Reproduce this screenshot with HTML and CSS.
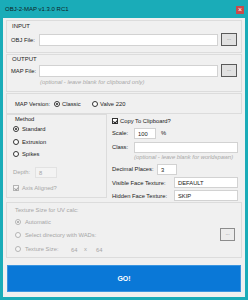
FILE: index.html
```html
<!DOCTYPE html>
<html lang="en">
<head>
    <meta charset="UTF-8">
    <title>OBJ-2-MAP v1.3.0 RC1</title>
    <link rel="stylesheet" href="styles.css">
</head>
<body>
    <div class="window">
        <div class="titlebar">
            <span class="title">OBJ-2-MAP v1.3.0 RC1</span>
            <span class="close">&#215;</span>
        </div>

        <div class="content">
            <section class="group group-input">
                <div class="group-title">INPUT</div>
                <div class="file-row">
                    <span class="file-label">OBJ File:</span>
                    <span class="field file-field"></span>
                    <span class="browse">...</span>
                </div>
            </section>

            <section class="group group-output">
                <div class="group-title">OUTPUT</div>
                <div class="file-row">
                    <span class="file-label">MAP File:</span>
                    <span class="field file-field"></span>
                    <span class="browse">...</span>
                </div>
                <div class="hint output-hint">(optional - leave blank for clipboard only)</div>
            </section>

            <div class="group version-row">
                <span class="version-label">MAP Version:</span>
                <span class="radio checked"></span><span class="version-opt">Classic</span>
                <span class="radio"></span><span class="version-opt">Valve 220</span>
            </div>

            <div class="middle">
                <section class="group method">
                    <div class="method-title">Method</div>
                    <div class="radio-row"><span class="radio checked"></span>Standard</div>
                    <div class="radio-row"><span class="radio"></span>Extrusion</div>
                    <div class="radio-row"><span class="radio"></span>Spikes</div>
                    <div class="depth-row disabled">
                        <span class="depth-label">Depth:</span>
                        <span class="field field-disabled depth-field">8</span>
                    </div>
                    <div class="axis-row disabled"><span class="check checked check-disabled"></span>Axis Aligned?</div>
                </section>

                <section class="options">
                    <div class="opt-row copy-row"><span class="check checked"></span>Copy To Clipboard?</div>
                    <div class="opt-row scale-row">
                        <span class="opt-label short">Scale:</span>
                        <span class="field scale-field">100</span>
                        <span class="unit">%</span>
                    </div>
                    <div class="opt-row class-row">
                        <span class="opt-label short">Class:</span>
                        <span class="field grow"></span>
                    </div>
                    <div class="hint class-hint">(optional - leave blank for worldspawn)</div>
                    <div class="opt-row decimal-row">
                        <span class="opt-label medium">Decimal Places:</span>
                        <span class="field decimal-field">3</span>
                    </div>
                    <div class="opt-row texture-row">
                        <span class="opt-label long">Visible Face Texture:</span>
                        <span class="field grow">DEFAULT</span>
                    </div>
                    <div class="opt-row texture-row">
                        <span class="opt-label long">Hidden Face Texture:</span>
                        <span class="field grow">SKIP</span>
                    </div>
                </section>
            </div>

            <section class="group texture disabled">
                <div class="texture-title">Texture Size for UV calc:</div>
                <div class="radio-row auto-row"><span class="radio checked"></span>Automatic</div>
                <div class="radio-row wad-row">
                    <span class="radio"></span><span class="wad-label">Select directory with WADs:</span>
                    <span class="field field-hidden grow"></span>
                    <span class="browse browse-disabled">...</span>
                </div>
                <div class="radio-row size-row">
                    <span class="radio"></span><span class="size-label">Texture Size:</span>
                    <span class="field field-disabled size-field">64</span>
                    <span class="times">x</span>
                    <span class="field field-disabled size-field">64</span>
                </div>
            </section>

            <button class="go">GO!</button>
        </div>
    </div>
</body>
</html>
```

FILE: styles.css
```css
* {
    box-sizing: border-box;
}

body {
    margin: 0;
    font-family: 'Liberation Sans', Arial, sans-serif;
    font-size: 5.8px;
    color: #1a1a1a;
}

.window {
    width: 248px;
    height: 300px;
    display: flex;
    flex-direction: column;
}

.titlebar {
    height: 18px;
    background-color: #1aacb8;
    display: flex;
    align-items: center;
    justify-content: space-between;
    padding: 0 4px 0 5px;
}

.title {
    font-size: 6px;
    color: #0e2226;
}

.close {
    width: 8px;
    height: 8px;
    margin-top: 2px;
    background-color: #c94a4a;
    color: #fff;
    font-size: 7px;
    line-height: 8px;
    text-align: center;
}

.content {
    flex: 1;
    background-color: #f0f0f0;
    border: 3px solid #1aacb8;
    border-top: 0;
    padding: 2px 3px 5px 3px;
    display: flex;
    flex-direction: column;
}

.group {
    border: 1px solid #dcdcdc;
}

.group-title {
    height: 10px;
    line-height: 10px;
    padding-left: 1px;
    font-size: 6px;
}

.group-input {
    height: 33px;
    padding: 0 4px;
}

.group-output {
    height: 38px;
    margin-top: 1px;
    padding: 0 4px;
}

.group-output .group-title {
    height: 9px;
    line-height: 9px;
}

.group-input .file-row {
    margin-top: 2px;
}

.file-row {
    height: 13px;
    display: flex;
    align-items: center;
}

.file-label {
    width: 28px;
}

.field {
    height: 11px;
    line-height: 10px;
    background-color: #fff;
    border: 1px solid #d2d2d2;
    padding-left: 3px;
}

.file-field {
    flex: 1;
    height: 12px;
}

.browse {
    width: 16px;
    height: 13px;
    margin-left: 3px;
    background-color: #e1e1e1;
    border: 1px solid #5a5a5a;
    color: #777;
    text-align: center;
    line-height: 9px;
    font-size: 5px;
}

.hint {
    height: 10px;
    line-height: 10px;
    color: #a8a8a8;
    font-style: italic;
}

.output-hint {
    padding-left: 29px;
}

.version-row {
    height: 21px;
    margin-top: 1px;
    display: flex;
    align-items: center;
    padding-left: 8px;
}

.version-label {
    width: 39px;
}

.version-opt {
    margin-left: 2px;
    width: 30px;
}

.radio {
    width: 6px;
    height: 6px;
    border: 1px solid #333;
    border-radius: 50%;
    background-color: #fff;
    display: inline-flex;
    align-items: center;
    justify-content: center;
    flex-shrink: 0;
}

.radio.checked::after {
    content: "";
    width: 2px;
    height: 2px;
    border-radius: 50%;
    background-color: #222;
}

.check {
    width: 6px;
    height: 6px;
    border: 1px solid #333;
    background-color: #fff;
    position: relative;
    flex-shrink: 0;
}

.check.checked::after {
    content: "";
    position: absolute;
    left: 1px;
    top: 0;
    width: 1.5px;
    height: 3px;
    border: solid #222;
    border-width: 0 1px 1px 0;
    transform: rotate(40deg);
}

.middle {
    height: 88px;
    display: flex;
    gap: 4px;
}

.method {
    width: 101px;
    height: 84px;
    padding: 0 0 0 6px;
}

.method-title {
    height: 8px;
    line-height: 8px;
    padding-left: 2px;
}

.radio-row {
    height: 12.5px;
    display: flex;
    align-items: center;
    gap: 3px;
}

.depth-row {
    height: 11px;
    margin-top: 6px;
    display: flex;
    align-items: center;
}

.depth-label {
    width: 22px;
}

.depth-field {
    width: 22px;
}

.axis-row {
    height: 11px;
    margin-top: 5px;
    display: flex;
    align-items: center;
    gap: 3px;
}

.disabled {
    color: #a6a6a6;
}

.field-disabled {
    background-color: #f3f3f3;
    border-color: #e2e2e2;
}

.field-hidden {
    background-color: transparent;
    border-color: transparent;
}

.check-disabled,
.disabled .radio {
    border-color: #b4b4b4;
    background-color: #f6f6f6;
}

.check-disabled::after {
    border-color: #a0a0a0 !important;
}

.disabled .radio.checked::after {
    background-color: #a0a0a0;
}

.options {
    flex: 1;
    padding: 2px 4px 0 1px;
}

.opt-row {
    height: 10px;
    display: flex;
    align-items: center;
}

.copy-row {
    gap: 2px;
}

.scale-row,
.decimal-row {
    margin-top: 2px;
}

.class-row {
    margin-top: 4px;
}

.texture-row {
    height: 11px;
    margin-top: 2px;
}

.decimal-row + .texture-row {
    margin-top: 3px;
}

.texture-row .field {
    height: 11px;
}

.opt-label.short {
    width: 22px;
}

.opt-label.medium {
    width: 45px;
}

.opt-label.long {
    width: 62px;
}

.scale-field {
    width: 22px;
}

.unit {
    margin-left: 5px;
}

.decimal-field {
    width: 20px;
}

.grow {
    flex: 1;
}

.class-hint {
    padding-left: 22px;
}

.texture {
    height: 56px;
    padding: 0 6px 0 8px;
}

.texture-title {
    height: 13px;
    line-height: 14px;
}

.auto-row {
    height: 11px;
    gap: 4px;
}

.wad-row {
    height: 13px;
    margin-top: 1px;
    gap: 0;
}

.wad-label {
    margin-left: 4px;
    width: 78px;
}

.wad-row .field {
    height: 11px;
}

.size-row {
    height: 12px;
    margin-top: 2px;
    gap: 0;
}

.size-label {
    margin-left: 4px;
    width: 42px;
}

.size-field {
    width: 15px;
    background-color: transparent;
    border-color: transparent;
}

.times {
    margin: 0 5px 0 2px;
}

.browse-disabled {
    width: 15px;
    border-color: #8c8c8c;
    background-color: #ececec;
}

.go {
    margin-top: 7px;
    height: 27px;
    width: 234px;
    margin-left: 1px;
    border: 1px solid #3a95e0;
    background-color: #0a78d7;
    color: #fff;
    font-family: 'Liberation Sans', Arial, sans-serif;
    font-weight: bold;
    font-size: 7px;
    cursor: pointer;
}
```
